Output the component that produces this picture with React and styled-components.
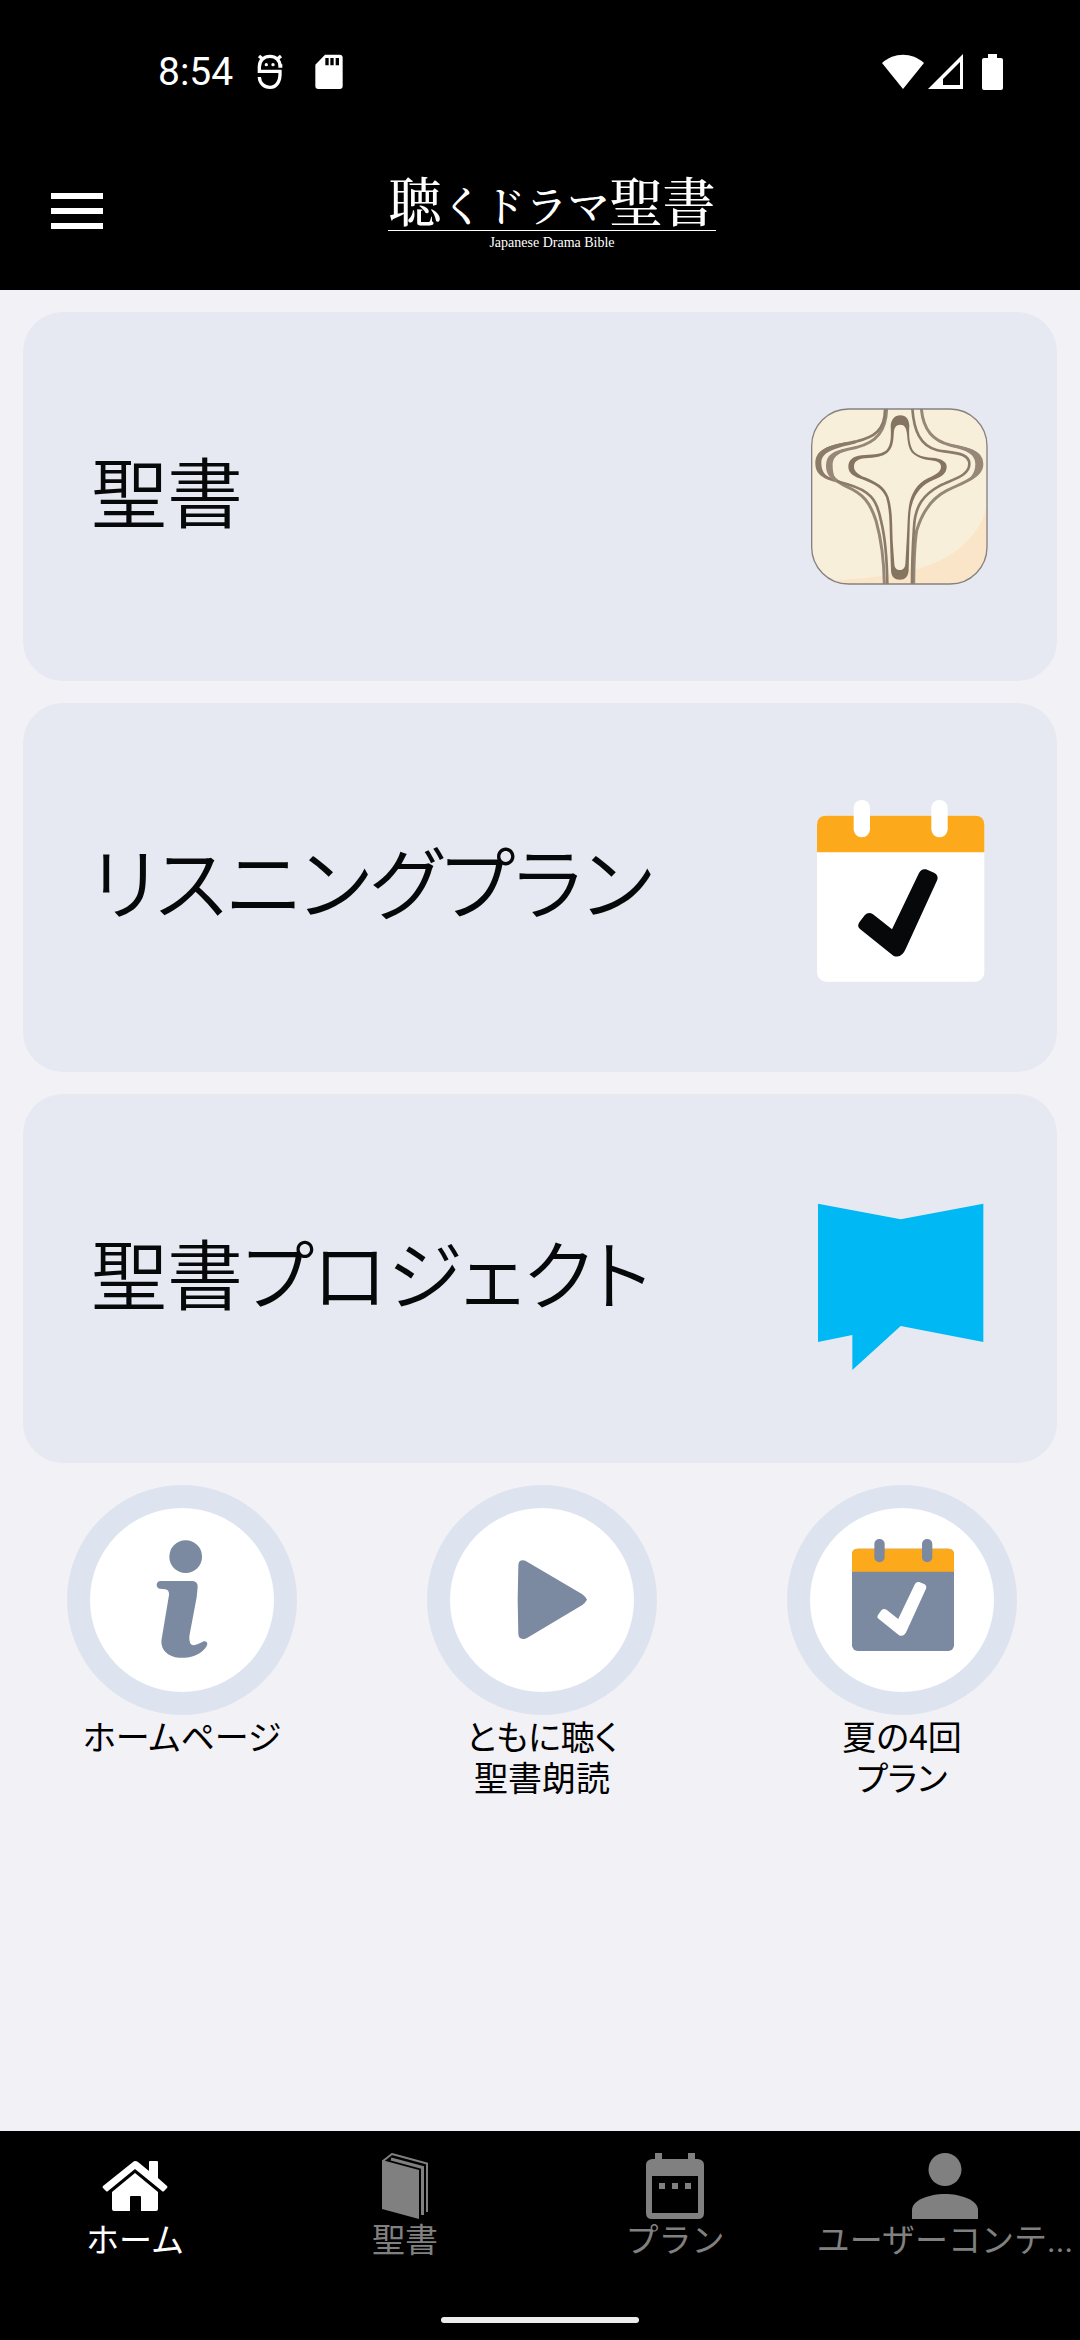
import React from "react";
import styled, { createGlobalStyle } from "styled-components";

const SLATE = "#7b8aa1";
const ORANGE = "#fcaa1c";

const CHECK =
    "M417 278 Q424 264 438 267 L462 277 Q476 284 472 298 L378 504 Q364 537 340 526 L240 446 Q230 438 238 426 L254 405 Q265 393 279 402 L336 447 Z";

const AndroidIcon = () => (
    <svg width="26" height="36" viewBox="0 0 78 108" fill="none" stroke="#fff" strokeWidth="10" aria-hidden="true">
        <path d="M76 36 H69 C69 18 56 7 39 7 C20 7 7 20 7 39 V52 H69 C71 83 58 100 39 100 C21 100 8 88 7 69" />
        <path d="M6 6 L18 16 M72 6 L60 16" />
        <circle cx="28" cy="32" r="5" fill="#fff" stroke="none" />
        <circle cx="48" cy="32" r="5" fill="#fff" stroke="none" />
    </svg>
);

const SdCardIcon = () => (
    <svg width="28" height="36" viewBox="0 0 84 106" aria-hidden="true">
        <path
            fill="#fff"
            fillRule="evenodd"
            d="M30 1 H74 Q83 1 83 10 V95 Q83 104 74 104 H10 Q1 104 1 95 V31 Z M31 11 V33 H41 V11 Z M46 11 V33 H56 V11 Z M62 11 V33 H72 V11 Z"
        />
    </svg>
);

const WifiIcon = () => (
    <svg width="42" height="36" viewBox="0 0 42 36" aria-hidden="true">
        <path fill="#fff" d="M0 9 C12 -2 30 -2 42 9 L21 35 Z" />
    </svg>
);

const SignalIcon = () => (
    <svg width="35" height="36" viewBox="0 0 35 36" aria-hidden="true">
        <path fill="#fff" fillRule="evenodd" d="M35 0 V35 H0 Z M32 8 L15 25 V31 H32 Z" />
    </svg>
);

const BatteryIcon = () => (
    <svg width="22" height="36" viewBox="0 0 22 36" aria-hidden="true">
        <path fill="#fff" d="M6 0 H15 V4 H19 Q21 4 21 6 V34 Q21 36 19 36 H2 Q0 36 0 34 V6 Q0 4 2 4 H6 Z" />
    </svg>
);

const BibleIcon = () => (
    <CardArt viewBox="93 64 531 567" aria-hidden="true">
        <clipPath id="tile">
            <rect x="94" y="84" width="528" height="527" rx="112" />
        </clipPath>
        <g clipPath="url(#tile)">
            <rect x="94" y="84" width="528" height="527" fill="#f7efd9" />
            <path fill="#fae5c8" d="M622 370 C600 480 500 545 400 568 C320 588 230 596 150 600 V611 H622 Z" />
            <g fill="none" stroke="#978779" strokeWidth="9">
                <path d="M320 84 C318 150 290 185 230 200 C180 210 148 215 148 255 C148 285 165 300 200 318 C250 340 270 365 288 420 C305 480 312 540 313 611" />
                <path d="M424 84 C430 150 460 180 510 193 C560 203 603 210 603 250 C603 290 550 305 500 330 C450 355 425 400 410 450 C402 500 402 550 401 611" />
            </g>
            <g fill="none" stroke="#8b7b69" strokeWidth="8">
                <path d="M315 84 C316 150 280 170 230 182 C160 195 113 200 113 248 C113 290 160 298 200 310 C270 330 290 355 303 420 C318 480 321 540 322 611" />
                <path d="M397 84 C402 150 420 195 470 208 C510 218 568 212 568 250 C568 285 520 295 480 315 C430 342 405 375 402 440 C398 500 396 550 396 611" />
            </g>
            <path fill="#8b7b69" d="M200 184 C140 196 106 208 106 248 C106 286 138 296 165 304 C140 290 124 276 124 248 C124 214 160 204 230 188 Z" />
            <path fill="#978779" d="M200 204 C160 210 138 222 138 255 C138 284 155 298 180 310 C165 296 158 280 158 255 C158 224 180 214 230 202 Z" />
            <path fill="#978779" d="M520 192 C570 202 610 210 610 250 C610 284 575 298 540 316 C570 294 586 280 586 250 C586 220 560 208 510 198 Z" />
            <path
                fill="#857560"
                fillRule="evenodd"
                d="M360 104 C380 104 387 118 388 135 C386 165 388 190 398 208 C410 225 430 229 455 231 C485 233 500 243 500 258 C500 278 485 288 460 298 C430 310 405 335 395 375 C388 400 390 440 388 480 L386 570 C384 588 375 597 360 597 C344 597 334 588 333 570 L330 480 C328 430 330 390 318 350 C308 325 285 310 250 297 C222 288 205 278 205 258 C205 240 218 226 245 224 C275 222 300 222 315 212 C335 197 333 165 332 135 C334 115 345 104 360 104 Z M360 132 C374 132 379 142 381 160 C383 190 388 208 398 218 C415 234 440 238 460 240 C475 242 483 248 483 258 C483 274 465 283 445 292 C410 308 393 340 387 375 C382 410 383 440 380 480 L376 550 C375 562 369 568 360 568 C350 568 344 562 343 550 L338 480 C336 430 338 390 326 350 C315 318 290 305 255 290 C235 282 222 272 222 258 C222 242 235 235 255 233 C285 230 308 228 322 216 C342 200 340 170 342 150 C344 138 350 132 360 132 Z"
            />
        </g>
        <rect x="95" y="85" width="526" height="525" rx="111" fill="none" stroke="#858180" strokeWidth="4" />
    </CardArt>
);

const PlanIcon = () => (
    <CardArt viewBox="93 38 531 567" aria-hidden="true">
        <rect x="111" y="106" width="502" height="498" rx="28" fill="#fff" />
        <path fill={ORANGE} d="M111 216 V134 Q111 106 139 106 H585 Q613 106 613 134 V216 Z" />
        <rect x="221" y="59" width="49" height="112" rx="24" fill="#fff" />
        <rect x="454" y="59" width="49" height="112" rx="24" fill="#fff" />
        <path fill="#060809" d={CHECK} />
    </CardArt>
);

const ProjectIcon = () => (
    <CardArt viewBox="93 10 531 567" aria-hidden="true">
        <path fill="#00b8f3" d="M114 69 L362 116 L610 69 V484 L362 436 L217 568 V463 L114 484 Z" />
    </CardArt>
);

const InfoIcon = () => (
    <RingArt viewBox="123 117 552 552" fill={SLATE} aria-hidden="true">
        <circle cx="410" cy="263" r="49" />
        <path d="M335 336 H430 Q447 338 446 354 L443 385 L421 502 Q420 528 432 529 Q442 529 464 517 Q474 515 475 525 C472 542 442 566 408 566 H390 C358 564 336 544 337 516 L360 378 Q361 362 348 361 L332 359 Q323 356 323 347 Q324 337 335 336 Z" />
    </RingArt>
);

const PlayIcon = () => (
    <RingArt viewBox="123 117 552 552" fill={SLATE} aria-hidden="true">
        <path d="M328 290 Q328 270 349 275 L520 376 Q528 382 534 392 Q528 402 520 408 L354 507 Q342 514 332 506 Q328 502 328 494 L326 392 Z" />
    </RingArt>
);

const SummerPlanIcon = () => (
    <RingArt viewBox="123 117 552 552" aria-hidden="true">
        <rect x="249" y="239" width="306" height="307" rx="17" fill={SLATE} />
        <path fill={ORANGE} d="M249 308 V256 Q249 239 266 239 H538 Q555 239 555 256 V308 Z" />
        <rect x="316" y="210" width="31" height="70" rx="15" fill={SLATE} />
        <rect x="459" y="210" width="31" height="70" rx="15" fill={SLATE} />
        <g transform="translate(181 175) scale(0.615)">
            <path fill="#fff" d={CHECK} />
        </g>
    </RingArt>
);

const HomeIcon = () => (
    <TabArt viewBox="0 0 66 66" aria-hidden="true">
        <path d="M31 9 Q33 7 36 9 L47 18 V9 Q47 8 48 8 H55 Q56 8 56 9 V25 L65 33 Q66 34 65 35 L62 38 Q61 39 60 38 L33 16 L6 38 Q5 39 4 38 L1 35 Q0 34 1 33 Z" />
        <path d="M33 20 L56 39 V56 Q56 58 54 58 H39 V44 Q39 43 38 43 H29 Q28 43 28 44 V58 H12 Q10 58 10 56 V39 Z" />
    </TabArt>
);

const BookIcon = () => (
    <TabArt viewBox="0 0 66 66" aria-hidden="true">
        <path d="M10 7 L47 17 V66 L10 56 Z" />
        <g fill="none" stroke="currentColor" strokeWidth="2">
            <path d="M11 8 L20 1 L55 10.5 V59" />
            <path d="M19 6 L50.5 14.5 V62" strokeWidth="3" />
        </g>
    </TabArt>
);

const CalendarIcon = () => (
    <TabArt viewBox="0 0 66 66" aria-hidden="true">
        <path
            fillRule="evenodd"
            d="M13 0 H20 V6 H46 V0 H53 V6 H56 Q62 7 62 12 V60 Q62 66 56 66 H10 Q4 66 4 60 V12 Q4 7 10 6 H13 Z M10 23 V60 H56 V23 Z"
        />
        <path d="M17 30 H23 V36 H17 Z M30 30 H36 V36 H30 Z M43 30 H49 V36 H43 Z" />
    </TabArt>
);

const PersonIcon = () => (
    <TabArt viewBox="0 0 66 66" aria-hidden="true">
        <circle cx="33" cy="16.5" r="16.5" />
        <path d="M0 66 V57 C0 47 18 41 33 41 S66 47 66 57 V66 Z" />
    </TabArt>
);

const cards = [
    { title: "聖書", Icon: BibleIcon },
    { title: "リスニングプラン", Icon: PlanIcon, wide: true },
    { title: "聖書プロジェクト", Icon: ProjectIcon },
];

const shortcuts = [
    { label: "ホームページ", Icon: InfoIcon },
    { label: "ともに聴く\n聖書朗読", Icon: PlayIcon },
    { label: "夏の4回\nプラン", Icon: SummerPlanIcon },
];

const tabs = [
    { label: "ホーム", Icon: HomeIcon },
    { label: "聖書", Icon: BookIcon },
    { label: "プラン", Icon: CalendarIcon },
    { label: "ユーザーコンテ...", Icon: PersonIcon },
];

const App = () => {
    return (
        <Page>
            <GlobalStyle />
            <StatusBar>
                <StatusGroup $gap="32px">
                    <Clock>8:54</Clock>
                    <AndroidIcon />
                    <SdCardIcon />
                </StatusGroup>
                <StatusGroup $gap="4px">
                    <WifiIcon />
                    <SignalIcon />
                    <BatterySlot>
                        <BatteryIcon />
                    </BatterySlot>
                </StatusGroup>
            </StatusBar>

            <Header>
                <MenuButton type="button" aria-label="メニュー">
                    <MenuLine />
                    <MenuLine />
                    <MenuLine />
                </MenuButton>
                <Brand>
                    <BrandName>
                        聴<Kana>くドラマ</Kana>聖書
                    </BrandName>
                    <BrandSub>Japanese Drama Bible</BrandSub>
                </Brand>
            </Header>

            <Main>
                {cards.map(({ title, Icon, wide }) => (
                    <Card href="#" key={title}>
                        <CardTitle $wide={wide}>{title}</CardTitle>
                        <Icon />
                    </Card>
                ))}
                <Shortcuts>
                    {shortcuts.map(({ label, Icon }) => (
                        <Shortcut href="#" key={label}>
                            <Ring>
                                <Icon />
                            </Ring>
                            <ShortcutLabel>{label}</ShortcutLabel>
                        </Shortcut>
                    ))}
                </Shortcuts>
            </Main>

            <BottomBar>
                <Tabs>
                    {tabs.map(({ label, Icon }, i) => (
                        <Tab href="#" key={label} $active={i === 0}>
                            <Icon />
                            <TabLabel>{label}</TabLabel>
                        </Tab>
                    ))}
                </Tabs>
                <HomeIndicator />
            </BottomBar>
        </Page>
    );
};

export default App;

const GlobalStyle = createGlobalStyle`
  * {
    box-sizing: border-box;
  }

  body {
    margin: 0;
    background: #f2f1f6;
    font-family: Roboto, "Noto Sans CJK JP", sans-serif;
  }

  a {
    text-decoration: none;
  }

  svg {
    display: block;
    flex-shrink: 0;
  }
`;

const Page = styled.div`
  min-height: 100vh;
  display: flex;
  flex-direction: column;
`;

const StatusBar = styled.div`
  display: flex;
  align-items: center;
  justify-content: space-between;
  height: 132px;
  padding: 11px 76px 0 158px;
  background: #000;
  color: #fff;
`;

const StatusGroup = styled.div`
  display: flex;
  align-items: center;
  gap: ${(props) => props.$gap};
`;

const Clock = styled.span`
  font-size: 39px;
  line-height: 46px;
  margin-right: -8px;
`;

const BatterySlot = styled.span`
  margin-left: 15px;
`;

const Header = styled.header`
  display: grid;
  grid-template-columns: 128px 1fr 104px;
  align-items: center;
  height: 158px;
  background: #000;
  color: #fff;
`;

const MenuButton = styled.button`
  display: flex;
  flex-direction: column;
  gap: 9px;
  width: 52px;
  margin-left: 51px;
  padding: 0;
  border: none;
  background: none;
  cursor: pointer;
`;

const MenuLine = styled.span`
  height: 6px;
  background: #fff;
`;

const Brand = styled.div`
  justify-self: center;
  padding-top: 8px;
  text-align: center;
  font-family: "Noto Serif CJK JP", "Noto Sans CJK JP", serif;
`;

const BrandName = styled.h1`
  margin: 0;
  padding-bottom: 6px;
  border-bottom: 1px solid #fff;
  font-size: 53px;
  font-weight: 500;
  line-height: 46px;
  white-space: nowrap;
`;

const Kana = styled.span`
  font-size: 42px;
  line-height: 40px;
`;

const BrandSub = styled.div`
  font-family: "Liberation Serif", serif;
  font-size: 14px;
  line-height: 24px;
`;

const Main = styled.main`
  flex: 1;
  display: flex;
  flex-direction: column;
  gap: 22px;
  padding: 22px 23px;
`;

const Card = styled.a`
  display: flex;
  align-items: center;
  justify-content: space-between;
  padding: 90px 69px 90px 68px;
  border-radius: 40px;
  background: #e6e9f2;
  color: #060809;
`;

const CardTitle = styled.h2`
  margin: 0;
  padding-bottom: 16px;
  font-family: "Noto Sans CJK JP", sans-serif;
  font-size: ${(props) => (props.$wide ? "79px" : "76px")};
  font-weight: 350;
  line-height: 100px;
  font-feature-settings: "palt";
`;

const CardArt = styled.svg`
  width: 177px;
  height: 189px;
`;

const Shortcuts = styled.div`
  display: grid;
  grid-template-columns: repeat(3, 1fr);
  margin: 0 -23px;
`;

const Shortcut = styled.a`
  display: flex;
  flex-direction: column;
  align-items: center;
  padding-left: 4px;
  color: #000;
`;

const Ring = styled.div`
  padding: 23px;
  border-radius: 50%;
  background: #dde3ef;
`;

const RingArt = styled.svg`
  width: 184px;
  height: 184px;
  border-radius: 50%;
  background: #fff;
`;

const ShortcutLabel = styled.span`
  font-family: "Noto Sans CJK JP", sans-serif;
  font-size: 34px;
  line-height: 41px;
  text-align: center;
  white-space: pre-line;
  font-feature-settings: "palt";
`;

const BottomBar = styled.footer`
  display: flex;
  flex-direction: column;
  align-items: center;
  background: #000;
`;

const Tabs = styled.nav`
  display: grid;
  grid-template-columns: repeat(4, 1fr);
  width: 100%;
  padding: 22px 0 54px;
`;

const Tab = styled.a`
  display: flex;
  flex-direction: column;
  align-items: center;
  min-width: 0;
  color: ${(props) => (props.$active ? "#fff" : "#808080")};
`;

const TabArt = styled.svg`
  width: 66px;
  height: 66px;
  fill: currentColor;
`;

const TabLabel = styled.span`
  font-size: 33px;
  line-height: 44px;
  white-space: nowrap;
`;

const HomeIndicator = styled.div`
  width: 198px;
  height: 6px;
  margin-bottom: 17px;
  border-radius: 3px;
  background: #ececec;
`;
